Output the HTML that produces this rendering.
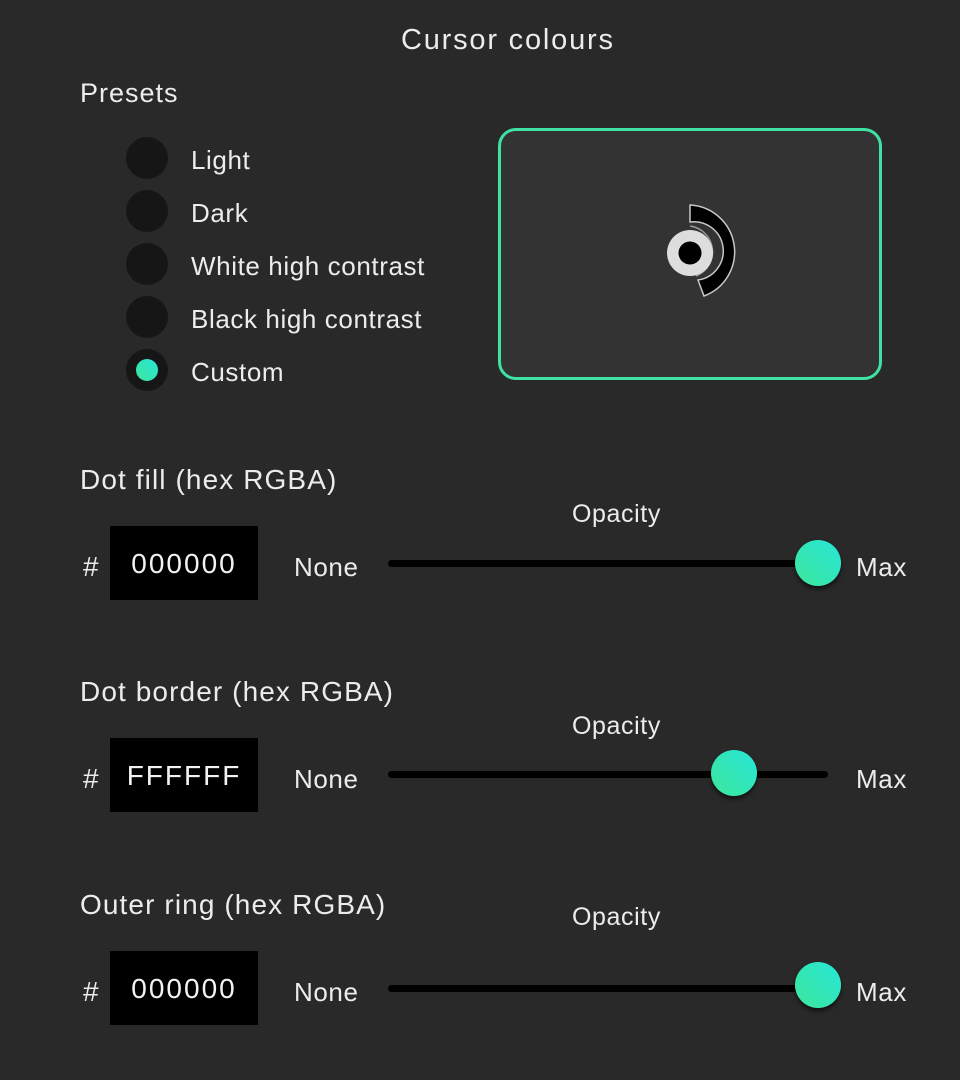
<!DOCTYPE html>
<html><head><style>
body{margin:0;width:960px;height:1080px;background:#292929;font-family:"Liberation Sans",sans-serif;color:#ececec;position:relative;overflow:hidden;letter-spacing:0.6px}
.t{position:absolute;white-space:nowrap}
.r{position:absolute;left:126px;width:42px;height:42px;border-radius:50%;background:#161616}
.hex{position:absolute;left:110px;width:148px;height:74px;background:#000;font-size:28px;line-height:76px;text-align:center;color:#f2f2f2;letter-spacing:2px}
.track{position:absolute;left:388px;width:440px;height:7px;border-radius:4px;background:#000}
.th{position:absolute;width:46px;height:46px;border-radius:50%;background:linear-gradient(45deg,#3de69a,#27e6d8);box-shadow:0 3px 4px rgba(0,0,0,.6)}
</style></head><body>
<div class="t" style="left:401px;top:24px;font-size:29px;letter-spacing:1.8px">Cursor colours</div>
<div class="t" style="left:80px;top:78px;font-size:27px;letter-spacing:1px">Presets</div>
<div class="r" style="top:137px"></div><div class="t" style="left:191px;top:145px;font-size:26px">Light</div>
<div class="r" style="top:190px"></div><div class="t" style="left:191px;top:198px;font-size:26px">Dark</div>
<div class="r" style="top:243px"></div><div class="t" style="left:191px;top:251px;font-size:26px">White high contrast</div>
<div class="r" style="top:296px"></div><div class="t" style="left:191px;top:304px;font-size:26px">Black high contrast</div>
<div class="r" style="top:349px"><div style="position:absolute;left:10px;top:10px;width:22px;height:22px;border-radius:50%;background:linear-gradient(45deg,#3de69a,#27e6d8)"></div></div>
<div class="t" style="left:191px;top:357px;font-size:26px">Custom</div>
<div style="position:absolute;left:498px;top:128px;width:378px;height:246px;border:3px solid #3ee3a3;border-radius:18px;background:#333"></div>
<svg style="position:absolute;left:640px;top:190px" width="120" height="120" viewBox="0 0 120 120">
<path d="M50 15 A47 47 0 0 1 64 106 L58 90 A29 29 0 0 0 50 32 Z" fill="#000" stroke="#c8c8c8" stroke-width="1.5"/>
<path d="M50 36 A26 26 0 0 1 56 86" fill="none" stroke="#999" stroke-width="1.5"/>
<circle cx="50" cy="63" r="23" fill="#ddd"/>
<circle cx="50" cy="63" r="11.5" fill="#000"/>
</svg>
<div class="t" style="left:80px;top:464px;font-size:28px;letter-spacing:1.1px">Dot fill (hex RGBA)</div>
<div class="t" style="left:572px;top:500px;font-size:25px">Opacity</div>
<div class="t" style="left:83px;top:551px;font-size:28px">#</div>
<div class="hex" style="top:526px">000000</div>
<div class="t" style="left:294px;top:552px;font-size:26px">None</div>
<div class="track" style="top:560px"></div><div class="th" style="left:795px;top:540px"></div>
<div class="t" style="left:856px;top:552px;font-size:26px">Max</div>

<div class="t" style="left:80px;top:676px;font-size:28px;letter-spacing:1.1px">Dot border (hex RGBA)</div>
<div class="t" style="left:572px;top:712px;font-size:25px">Opacity</div>
<div class="t" style="left:83px;top:763px;font-size:28px">#</div>
<div class="hex" style="top:738px">FFFFFF</div>
<div class="t" style="left:294px;top:764px;font-size:26px">None</div>
<div class="track" style="top:771px"></div><div class="th" style="left:711px;top:750px"></div>
<div class="t" style="left:856px;top:764px;font-size:26px">Max</div>

<div class="t" style="left:80px;top:889px;font-size:28px;letter-spacing:1.1px">Outer ring (hex RGBA)</div>
<div class="t" style="left:572px;top:903px;font-size:25px">Opacity</div>
<div class="t" style="left:83px;top:976px;font-size:28px">#</div>
<div class="hex" style="top:951px">000000</div>
<div class="t" style="left:294px;top:977px;font-size:26px">None</div>
<div class="track" style="top:985px"></div><div class="th" style="left:795px;top:962px"></div>
<div class="t" style="left:856px;top:977px;font-size:26px">Max</div>
</body></html>
